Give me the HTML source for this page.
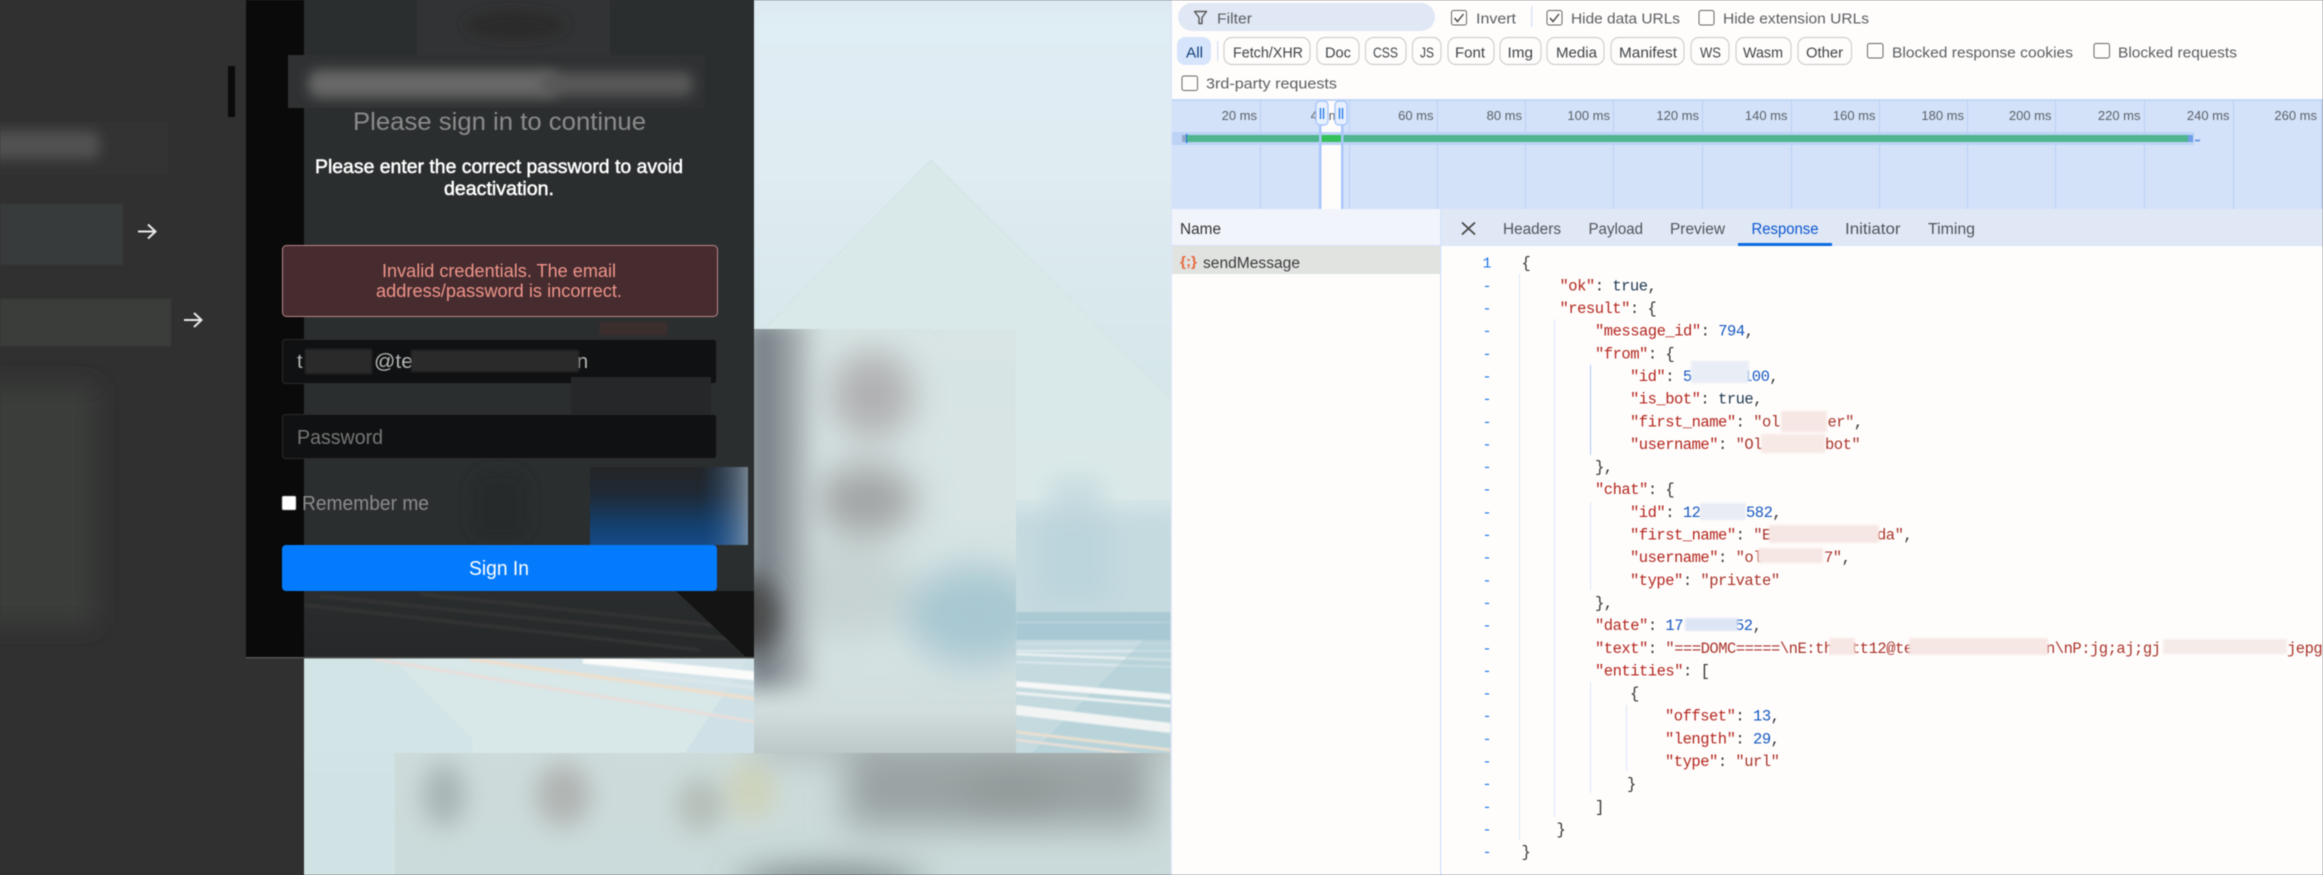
<!DOCTYPE html>
<html><head><meta charset="utf-8"><title>Network</title>
<style>
html,body{margin:0;padding:0;background:#303030;width:2323px;height:875px;overflow:hidden}
svg{display:block;filter:blur(.4px)}
text{white-space:pre;font-family:"Liberation Sans",sans-serif}
.d{font-size:15px;fill:#3f4346}
.g{font-size:15px;fill:#5a5d61}
.t{font-size:13px;fill:#5b6068;text-anchor:end}
.c text,.c{font-family:"Liberation Mono",monospace;font-size:15.5px;letter-spacing:-.5px}
.c text{fill:#333}
.k{fill:#b3261e}.n{fill:#1558c0}.s{fill:#a9342b}.b{fill:#1f3a52}
.ln{font-family:"Liberation Mono",monospace;font-size:15px;fill:#1a73e8;text-anchor:middle}
.tab{font-size:15.5px;fill:#50555b}
</style></head>
<body>
<svg width="2323" height="875" viewBox="0 0 2323 875" xmlns="http://www.w3.org/2000/svg">
<defs>
<linearGradient id="bg" x1="0" y1="0" x2="0" y2="1">
<stop offset="0" stop-color="#dde9f0"/><stop offset=".03" stop-color="#dfedf4"/><stop offset=".2" stop-color="#dfecf2"/><stop offset=".4" stop-color="#d7e7ea"/><stop offset=".7" stop-color="#d3e4e5"/><stop offset="1" stop-color="#d0e2e4"/>
</linearGradient>
<linearGradient id="blue" x1="0" y1="0" x2="0" y2="1">
<stop offset="0" stop-color="#242526"/><stop offset=".35" stop-color="#1f2a36"/><stop offset=".75" stop-color="#14406f"/><stop offset="1" stop-color="#164a86"/>
</linearGradient>
<linearGradient id="fadeR" x1="0" y1="0" x2="1" y2="0">
<stop offset="0" stop-color="#164a86" stop-opacity="0"/><stop offset="1" stop-color="#8fa0b0" stop-opacity=".75"/>
</linearGradient>
<linearGradient id="blockB" x1="0" y1="0" x2="0" y2="1">
<stop offset="0" stop-color="#d8e5e4"/><stop offset=".75" stop-color="#d6e3e3"/><stop offset=".9" stop-color="#d2dede"/><stop offset="1" stop-color="#bcc7c7"/>
</linearGradient>
<linearGradient id="botB" x1="0" y1="0" x2="0" y2="1">
<stop offset="0" stop-color="#cddbda"/><stop offset="1" stop-color="#cbdada"/>
</linearGradient>
<linearGradient id="panelB" x1="0" y1="0" x2="0" y2="1">
<stop offset="0" stop-color="#2b2e2f"/><stop offset=".88" stop-color="#2b2e2f"/><stop offset="1" stop-color="#262829"/>
</linearGradient>
<linearGradient id="strip" x1="0" y1="0" x2="1" y2="0">
<stop offset="0" stop-color="#59626a"/><stop offset=".3" stop-color="#7d868c"/><stop offset=".7" stop-color="#a5adb1"/><stop offset="1" stop-color="#b5bcbe" stop-opacity="0"/>
</linearGradient>
<filter id="b3" x="-30%" y="-30%" width="160%" height="160%"><feGaussianBlur stdDeviation="3"/></filter>
<filter id="b6" x="-30%" y="-80%" width="160%" height="260%"><feGaussianBlur stdDeviation="6"/></filter>
<filter id="b12" x="-50%" y="-50%" width="200%" height="200%"><feGaussianBlur stdDeviation="12"/></filter>
<filter id="b18" x="-60%" y="-60%" width="220%" height="220%"><feGaussianBlur stdDeviation="18"/></filter>
<filter id="b1" x="-10%" y="-10%" width="120%" height="120%"><feGaussianBlur stdDeviation="1"/></filter>
<filter id="bs" x="-5%" y="-30%" width="110%" height="160%"><feGaussianBlur stdDeviation=".8"/></filter>
<clipPath id="cBlock"><rect x="754" y="329" width="262" height="424"/></clipPath>
<clipPath id="cBot"><rect x="395" y="753" width="776" height="122"/></clipPath>
<clipPath id="cScene"><rect x="1016" y="440" width="155" height="313"/></clipPath>
<clipPath id="cName"><rect x="288" y="55" width="417" height="53"/></clipPath>
<clipPath id="cTop"><rect x="417" y="0" width="193" height="63"/></clipPath>
<clipPath id="cL1"><rect x="0" y="122" width="168" height="53"/></clipPath>
<clipPath id="cStreak"><rect x="304" y="659" width="450" height="94"/></clipPath>
<clipPath id="cCode"><rect x="1441" y="246" width="882" height="629"/></clipPath>
</defs>

<rect width="2323" height="875" fill="#303030"/>

<!-- background picture -->
<rect x="304" y="0" width="867" height="875" fill="url(#bg)"/>
<polygon points="931,160 1171,399 1171,753 754,753 754,339 764,329" fill="#d9e8e8"/>
<path d="M764 329 L931 160 L1171 399" fill="none" stroke="#d2e3ea" stroke-width="1"/>

<!-- streaks under panel -->
<g clip-path="url(#cStreak)">
<rect x="304" y="659" width="450" height="94" fill="#d2e4e5"/>
<polygon points="393,659 472,738 472,753 685,753 756,670 756,659" fill="#d8e7e7"/>
<polygon points="470,659 756,659 756,700" fill="#d3e3e8"/>
<polygon points="685,753 756,646 756,753" fill="#cfe1e6"/>
<g filter="url(#bs)">
<path d="M470 659 L756 699" stroke="#ecdfcf" stroke-width="4"/>
<path d="M373 659 L756 722" stroke="#e9dedb" stroke-width="3"/>
<path d="M583 659 L756 676" stroke="#fbfbfa" stroke-width="9"/>
<path d="M640 674 L756 688" stroke="#d9e6ea" stroke-width="4"/>
</g>
</g>

<!-- right scene -->
<g clip-path="url(#cScene)">
<rect x="1016" y="500" width="155" height="253" fill="#c4dadf"/>
<g filter="url(#b12)">
<rect x="1000" y="400" width="190" height="108" fill="#dae8e8"/>
<rect x="1050" y="478" width="52" height="50" fill="#c8dce0"/>
<rect x="1040" y="512" width="70" height="90" fill="#bcd4db"/>
</g>
<g filter="url(#bs)">
<rect x="1016" y="612" width="155" height="10" fill="#abc9d3"/>
<rect x="1016" y="623" width="155" height="17" fill="#a9c8d5"/>
<rect x="1016" y="642" width="155" height="3" fill="#c9dde3"/>
<rect x="1016" y="650" width="155" height="2" fill="#e2ecef"/>
<path d="M1016 654 L1171 660" stroke="#eaf1f3" stroke-width="2.500"/>
<path d="M1016 662 L1171 667" stroke="#dde9ed" stroke-width="2"/>
</g>
<polygon points="1171,612 1032,753 1171,753" fill="#a8cad2" opacity=".4"/>
<g filter="url(#bs)">
<path d="M1016 684 L1171 697" stroke="#f6f7f7" stroke-width="6"/>
<path d="M1016 693 L1171 706" stroke="#eef2f2" stroke-width="3"/>
<path d="M1016 710 L1171 728" stroke="#f2f4f4" stroke-width="10"/>
<path d="M1016 732 L1171 750" stroke="#ebdfd0" stroke-width="3"/>
<path d="M1016 740 L1171 758" stroke="#ebdfd8" stroke-width="2.500"/>
</g>
</g>

<!-- large blurred block -->
<g clip-path="url(#cBlock)">
<rect x="754" y="329" width="262" height="424" fill="url(#blockB)"/>
<g filter="url(#b18)">
<ellipse cx="975" cy="615" rx="70" ry="50" fill="#a8c7d1"/>
<ellipse cx="850" cy="590" rx="60" ry="50" fill="#c6d3d2"/>
<ellipse cx="872" cy="395" rx="42" ry="44" fill="#b0b0b2"/>
<ellipse cx="866" cy="500" rx="50" ry="36" fill="#a3a5a6"/>
</g>
<rect x="746" y="318" width="74" height="370" fill="url(#strip)" filter="url(#b12)"/>
<ellipse cx="748" cy="615" rx="30" ry="40" fill="#48484a" filter="url(#b12)"/>
</g>

<!-- bottom blurred block -->
<g clip-path="url(#cBot)">
<rect x="395" y="753" width="776" height="122" fill="url(#botB)"/>
<g filter="url(#b12)">
<ellipse cx="444" cy="795" rx="22" ry="32" fill="#a8b5b6"/>
<ellipse cx="563" cy="795" rx="28" ry="32" fill="#b1b5b4"/>
<ellipse cx="700" cy="805" rx="24" ry="28" fill="#b6c0ba"/>
<ellipse cx="752" cy="790" rx="24" ry="30" fill="#cdd3bb"/>
</g>
<g filter="url(#b18)">
<rect x="846" y="742" width="305" height="85" fill="#9aa3a3"/>
<ellipse cx="1012" cy="793" rx="50" ry="26" fill="#929a9a"/>
<ellipse cx="830" cy="885" rx="95" ry="14" fill="#5e6a6a"/>
<rect x="760" y="730" width="420" height="26" fill="#a9b2b2"/>
</g>
</g>

<!-- login panel -->
<rect x="304" y="0" width="450" height="658" fill="url(#panelB)"/>
<g filter="url(#bs)">
<path d="M304 605 L700 650 M320 596 L740 640 M420 594 L740 628" stroke="#323232" stroke-width="4" opacity=".8"/>
</g>
<polygon points="676,591 754,591 754,658 747,658" fill="#141414"/>
<rect x="470" y="470" width="60" height="70" rx="20" fill="#272b2c" filter="url(#b6)"/>
<rect x="246" y="0" width="58" height="658" fill="#0a0a0a"/>
<rect x="246" y="657" width="508" height="1.500" fill="#555"/>

<g clip-path="url(#cTop)">
<rect x="417" y="0" width="193" height="63" fill="#323334"/>
<ellipse cx="515" cy="25" rx="50" ry="14" fill="#2c2c2c" filter="url(#b6)"/>
</g>
<g clip-path="url(#cName)">
<rect x="288" y="55" width="417" height="53" fill="#2f3132"/>
<rect x="308" y="70" width="250" height="28" rx="12" fill="#676767" filter="url(#b6)"/>
<rect x="540" y="72" width="153" height="24" rx="10" fill="#595959" filter="url(#b6)"/>
</g>

<text x="353" y="130" font-size="25" fill="#8b8b8b" textLength="293" lengthAdjust="spacingAndGlyphs">Please sign in to continue</text>
<text x="315" y="173" font-size="19.5" fill="#fff" stroke="#fff" stroke-width=".5" textLength="368" lengthAdjust="spacingAndGlyphs">Please enter the correct password to avoid</text>
<text x="444" y="195" font-size="19.5" fill="#fff" stroke="#fff" stroke-width=".5" textLength="110" lengthAdjust="spacingAndGlyphs">deactivation.</text>

<rect x="282.500" y="245.500" width="435" height="71" rx="4" fill="#462b2f" stroke="#b98888"/>
<text x="382" y="277" font-size="18" fill="#ee9589" textLength="234" lengthAdjust="spacingAndGlyphs">Invalid credentials. The email</text>
<text x="376" y="297" font-size="18" fill="#ee9589" textLength="246" lengthAdjust="spacingAndGlyphs">address/password is incorrect.</text>

<rect x="600" y="322" width="67" height="13" fill="#3c2e2e" filter="url(#b1)"/>

<rect x="282.500" y="339.500" width="434" height="44" rx="3" fill="#101112" stroke="#2a2a2a"/>
<text x="297" y="368" font-size="20" fill="#b5b5b5">t</text>
<text x="374" y="368" font-size="20" fill="#b5b5b5" textLength="39" lengthAdjust="spacingAndGlyphs">@te</text>
<text x="577" y="368" font-size="20" fill="#b5b5b5">n</text>
<rect x="305" y="349" width="67" height="25" fill="#2b2b2b" filter="url(#b1)"/>
<rect x="411" y="350" width="168" height="22" fill="#2b2b2b" filter="url(#b1)"/>
<rect x="571" y="377" width="140" height="37" fill="#262728"/>

<rect x="282.500" y="414.500" width="434" height="44" rx="3" fill="#101112" stroke="#2a2a2a"/>
<text x="297" y="444" font-size="20" fill="#767676" textLength="86" lengthAdjust="spacingAndGlyphs">Password</text>

<rect x="282" y="496" width="14" height="14" rx="1.500" fill="#fff" stroke="#777" stroke-width=".6"/>
<text x="302" y="510" font-size="20" fill="#8c8c8c" textLength="127" lengthAdjust="spacingAndGlyphs">Remember me</text>

<rect x="590" y="467" width="158" height="78" fill="url(#blue)"/>
<rect x="700" y="467" width="48" height="78" fill="url(#fadeR)"/>

<rect x="282" y="545" width="435" height="46" rx="4" fill="#047bfd"/>
<text x="469" y="575" font-size="20" fill="#fff" textLength="60" lengthAdjust="spacingAndGlyphs">Sign In</text>

<!-- left dark content -->
<g clip-path="url(#cL1)">
<rect x="0" y="122" width="168" height="53" fill="#333333"/>
<rect x="-30" y="131" width="130" height="28" rx="10" fill="#515151" filter="url(#b6)"/>
</g>
<rect x="0" y="204" width="123" height="61" fill="#393b3a" filter="url(#bs)"/>
<rect x="0" y="299" width="171" height="47" fill="#3a3c3b" filter="url(#bs)"/>
<rect x="-40" y="385" width="135" height="240" fill="#3a3d3b" filter="url(#b12)"/>
<rect x="228" y="66" width="7" height="51" fill="#0b0b0b"/>
<path d="M138 231.500H155 M148 224.500L155.500 231.500L148 238.500" fill="none" stroke="#e8e8e8" stroke-width="2"/>
<path d="M184 320H201 M194 313L201.500 320L194 327" fill="none" stroke="#e8e8e8" stroke-width="2"/>

<!-- DEVTOOLS -->
<rect x="1171" y="0" width="1152" height="875" fill="#fffdfc"/>
<rect x="1170.500" y="0" width="1.500" height="875" fill="#dbe6f6"/>

<rect x="1178" y="3" width="257" height="28" rx="14" fill="#e0e8f5"/>
<path d="M1194.500 11.500H1206.500L1202 17.500V23.500H1199V17.500Z" fill="none" stroke="#555" stroke-width="1.400" stroke-linejoin="round"/>
<text x="1217" y="23.500" class="g" textLength="35" lengthAdjust="spacingAndGlyphs">Filter</text>

<rect x="1451.500" y="10.500" width="15" height="14.500" rx="2" fill="#fffdfc" stroke="#666"/>
<path d="M1454.500 18l3 3.500l6-7.500" fill="none" stroke="#444" stroke-width="1.400"/>
<text x="1476" y="23.500" class="g" textLength="40" lengthAdjust="spacingAndGlyphs">Invert</text>
<rect x="1531" y="6" width="1.500" height="21" fill="#d8e3f3"/>
<rect x="1547" y="10.500" width="15" height="14.500" rx="2" fill="#fffdfc" stroke="#666"/>
<path d="M1550 18l3 3.500l6-7.500" fill="none" stroke="#444" stroke-width="1.400"/>
<text x="1571" y="23.500" class="g" textLength="109" lengthAdjust="spacingAndGlyphs">Hide data URLs</text>
<rect x="1699" y="10.500" width="15" height="14.500" rx="2" fill="#fffdfc" stroke="#666"/>
<text x="1723" y="23.500" class="g" textLength="146" lengthAdjust="spacingAndGlyphs">Hide extension URLs</text>

<rect x="1177" y="37" width="34" height="28" rx="8" fill="#d6e5fb"/>
<text x="1186" y="57.500" class="d" style="fill:#113f7a" textLength="17" lengthAdjust="spacingAndGlyphs">All</text>
<rect x="1217" y="41" width="1.500" height="20" fill="#d8e3f3"/>

<g fill="#fffdfc" stroke="#cfcfcf" stroke-width="1.200">
<rect x="1224" y="37.500" width="86" height="27" rx="8"/>
<rect x="1317" y="37.500" width="42" height="27" rx="8"/>
<rect x="1365.500" y="37.500" width="40.500" height="27" rx="8"/>
<rect x="1412.500" y="37.500" width="28.500" height="27" rx="8"/>
<rect x="1448" y="37.500" width="46" height="27" rx="8"/>
<rect x="1500" y="37.500" width="41" height="27" rx="8"/>
<rect x="1547" y="37.500" width="57" height="27" rx="8"/>
<rect x="1611" y="37.500" width="73" height="27" rx="8"/>
<rect x="1691" y="37.500" width="38" height="27" rx="8"/>
<rect x="1736" y="37.500" width="55" height="27" rx="8"/>
<rect x="1798" y="37.500" width="53.500" height="27" rx="8"/>
</g>
<text x="1233" y="57.500" class="d" textLength="70" lengthAdjust="spacingAndGlyphs">Fetch/XHR</text>
<text x="1325" y="57.500" class="d" textLength="26" lengthAdjust="spacingAndGlyphs">Doc</text>
<text x="1373" y="57.500" class="d" textLength="25" lengthAdjust="spacingAndGlyphs">CSS</text>
<text x="1420" y="57.500" class="d" textLength="14" lengthAdjust="spacingAndGlyphs">JS</text>
<text x="1455" y="57.500" class="d" textLength="30" lengthAdjust="spacingAndGlyphs">Font</text>
<text x="1507.500" y="57.500" class="d" textLength="25.500" lengthAdjust="spacingAndGlyphs">Img</text>
<text x="1556" y="57.500" class="d" textLength="41" lengthAdjust="spacingAndGlyphs">Media</text>
<text x="1619" y="57.500" class="d" textLength="58" lengthAdjust="spacingAndGlyphs">Manifest</text>
<text x="1700" y="57.500" class="d" textLength="21" lengthAdjust="spacingAndGlyphs">WS</text>
<text x="1743" y="57.500" class="d" textLength="40" lengthAdjust="spacingAndGlyphs">Wasm</text>
<text x="1806" y="57.500" class="d" textLength="37" lengthAdjust="spacingAndGlyphs">Other</text>

<rect x="1867.500" y="43.500" width="15.500" height="14.500" rx="2" fill="#fffdfc" stroke="#666"/>
<text x="1892" y="57.500" class="g" textLength="181" lengthAdjust="spacingAndGlyphs">Blocked response cookies</text>
<rect x="2094" y="43.500" width="15.500" height="14.500" rx="2" fill="#fffdfc" stroke="#666"/>
<text x="2118" y="57.500" class="g" textLength="119" lengthAdjust="spacingAndGlyphs">Blocked requests</text>
<rect x="1182" y="76" width="15.500" height="14.500" rx="2" fill="#fffdfc" stroke="#666"/>
<text x="1206" y="88.500" class="g" textLength="131" lengthAdjust="spacingAndGlyphs">3rd-party requests</text>

<!-- timeline -->
<rect x="1172" y="99" width="1151" height="110" fill="#d3e2f9"/>
<rect x="1172" y="99" width="1151" height="2" fill="#c3d7f8"/>
<g fill="#b9d0f6">
<rect x="1260" y="101" width="1" height="108"/><rect x="1349" y="101" width="1" height="108"/><rect x="1437" y="101" width="1" height="108"/><rect x="1525" y="101" width="1" height="108"/><rect x="1613" y="101" width="1" height="108"/><rect x="1702" y="101" width="1" height="108"/><rect x="1791" y="101" width="1" height="108"/><rect x="1879" y="101" width="1" height="108"/><rect x="1967" y="101" width="1" height="108"/><rect x="2055" y="101" width="1" height="108"/><rect x="2144" y="101" width="1" height="108"/><rect x="2233" y="101" width="1" height="108"/><rect x="2321" y="101" width="1" height="108"/>
</g>
<rect x="1321" y="101" width="20" height="108" fill="#fffdfc"/>
<rect x="1172" y="132" width="1022" height="13" fill="#bcd3f6"/>
<text x="1257" y="120" class="t">20 ms</text>
<text x="1346" y="120" class="t">40 ms</text>
<text x="1433.500" y="120" class="t">60 ms</text>
<text x="1522" y="120" class="t">80 ms</text>
<text x="1610" y="120" class="t">100 ms</text>
<text x="1699" y="120" class="t">120 ms</text>
<text x="1787.500" y="120" class="t">140 ms</text>
<text x="1875.500" y="120" class="t">160 ms</text>
<text x="1964" y="120" class="t">180 ms</text>
<text x="2051.500" y="120" class="t">200 ms</text>
<text x="2140.500" y="120" class="t">220 ms</text>
<text x="2229.500" y="120" class="t">240 ms</text>
<text x="2317" y="120" class="t">260 ms</text>
<rect x="1182" y="135" width="5" height="7" fill="#93a8c8"/>
<rect x="1186" y="134" width="1.500" height="9" fill="#1a73e8"/>
<rect x="1187" y="135" width="1001" height="7" fill="#4fb58f"/>
<rect x="1321" y="135" width="20" height="7" fill="#34c05a"/>
<rect x="2188" y="135" width="5" height="7" fill="#6f9fe6"/>
<rect x="2195" y="139.500" width="5" height="2" fill="#6f9fe6"/>
<rect x="1319" y="125" width="2.500" height="84" fill="#a8c7fa"/>
<rect x="1341" y="125" width="2.500" height="84" fill="#a8c7fa"/>
<rect x="1316" y="101" width="12" height="24" rx="4" fill="#e8f0fe" stroke="#a8c7fa" stroke-width="1.400"/>
<rect x="1335" y="101" width="12" height="24" rx="4" fill="#e8f0fe" stroke="#a8c7fa" stroke-width="1.400"/>
<path d="M1320.500 108v11 M1323.500 108v11 M1339.500 108v11 M1342.500 108v11" stroke="#1a73e8" stroke-width="1.300"/>

<!-- header row -->
<rect x="1172" y="209" width="268" height="36" fill="#f1f4fb"/>
<rect x="1441" y="209" width="882" height="36" fill="#e0e8f5"/>
<rect x="1172" y="245" width="268" height="1" fill="#d6e3f7"/>
<rect x="1441" y="245" width="882" height="1" fill="#d6e3f7"/>
<text x="1180" y="234" class="tab" style="fill:#333" textLength="41" lengthAdjust="spacingAndGlyphs">Name</text>
<path d="M1462 222.500L1475 234.500M1475 222.500L1462 234.500" stroke="#444" stroke-width="1.700"/>
<text x="1503" y="234" class="tab" textLength="58" lengthAdjust="spacingAndGlyphs">Headers</text>
<text x="1588.500" y="234" class="tab" textLength="54.500" lengthAdjust="spacingAndGlyphs">Payload</text>
<text x="1670" y="234" class="tab" textLength="55" lengthAdjust="spacingAndGlyphs">Preview</text>
<text x="1751.500" y="234" class="tab" style="fill:#0b57d0" textLength="67" lengthAdjust="spacingAndGlyphs">Response</text>
<rect x="1738" y="243" width="94" height="3" fill="#0b6be0"/>
<text x="1845" y="234" class="tab" textLength="55.500" lengthAdjust="spacingAndGlyphs">Initiator</text>
<text x="1928" y="234" class="tab" textLength="47" lengthAdjust="spacingAndGlyphs">Timing</text>

<rect x="1172" y="246" width="268" height="28" fill="#e1e3e1"/>
<text x="1180" y="266" font-size="14" fill="#e8693f" textLength="17" lengthAdjust="spacingAndGlyphs" font-weight="bold">{;}</text>
<text x="1203" y="268" class="tab" style="fill:#3a3a3a" textLength="97" lengthAdjust="spacingAndGlyphs">sendMessage</text>
<rect x="1440" y="209" width="1.500" height="666" fill="#d6e4fb"/>

<!-- gutter -->
<text class="ln" x="1487" y="267.700">1</text>
<g class="ln">
<text class="ln" x="1487" y="290.400">-</text><text class="ln" x="1487" y="313">-</text><text class="ln" x="1487" y="335.700">-</text><text class="ln" x="1487" y="358.300">-</text><text class="ln" x="1487" y="381">-</text><text class="ln" x="1487" y="403.600">-</text><text class="ln" x="1487" y="426.300">-</text><text class="ln" x="1487" y="448.900">-</text><text class="ln" x="1487" y="471.600">-</text><text class="ln" x="1487" y="494.200">-</text><text class="ln" x="1487" y="516.900">-</text><text class="ln" x="1487" y="539.500">-</text><text class="ln" x="1487" y="562.200">-</text><text class="ln" x="1487" y="584.800">-</text><text class="ln" x="1487" y="607.500">-</text><text class="ln" x="1487" y="630.100">-</text><text class="ln" x="1487" y="652.800">-</text><text class="ln" x="1487" y="675.400">-</text><text class="ln" x="1487" y="698.100">-</text><text class="ln" x="1487" y="720.700">-</text><text class="ln" x="1487" y="743.400">-</text><text class="ln" x="1487" y="766">-</text><text class="ln" x="1487" y="788.700">-</text><text class="ln" x="1487" y="811.300">-</text><text class="ln" x="1487" y="834">-</text><text class="ln" x="1487" y="856.600">-</text>
</g>

<!-- indent guides -->
<g fill="#dbe6f8">
<rect x="1519" y="274" width="1" height="566"/>
<rect x="1554" y="319" width="1" height="498"/>
<rect x="1590" y="502" width="1" height="88"/>
<rect x="1590" y="682" width="1" height="111"/>
<rect x="1626" y="705" width="1" height="66"/>
</g>
<rect x="1590" y="365" width="1" height="90" fill="#a8c7fa"/>

<!-- code -->
<g class="c" clip-path="url(#cCode)">
<text x="1521.500" y="267.700">{</text>
<text x="1559.500" y="290.400"><tspan class="k">"ok"</tspan>: <tspan class="b">true</tspan>,</text>
<text x="1559.500" y="313"><tspan class="k">"result"</tspan>: {</text>
<text x="1595" y="335.700"><tspan class="k">"message_id"</tspan>: <tspan class="n">794</tspan>,</text>
<text x="1595" y="358.300"><tspan class="k">"from"</tspan>: {</text>
<text x="1630" y="381"><tspan class="k">"id"</tspan>: <tspan class="n">5</tspan></text>
<text x="1743" y="381"><tspan class="n">100</tspan>,</text>
<text x="1630" y="403.600"><tspan class="k">"is_bot"</tspan>: <tspan class="b">true</tspan>,</text>
<text x="1630" y="426.300"><tspan class="k">"first_name"</tspan>: <tspan class="s">"ol</tspan></text>
<text x="1827.500" y="426.300"><tspan class="s">er"</tspan>,</text>
<text x="1630" y="448.900"><tspan class="k">"username"</tspan>: <tspan class="s">"Ol</tspan></text>
<text x="1825" y="448.900"><tspan class="s">bot"</tspan></text>
<text x="1595" y="471.600">},</text>
<text x="1595" y="494.200"><tspan class="k">"chat"</tspan>: {</text>
<text x="1630" y="516.900"><tspan class="k">"id"</tspan>: <tspan class="n">12</tspan></text>
<text x="1746" y="516.900"><tspan class="n">582</tspan>,</text>
<text x="1630" y="539.500"><tspan class="k">"first_name"</tspan>: <tspan class="s">"E</tspan></text>
<text x="1877" y="539.500"><tspan class="s">da"</tspan>,</text>
<text x="1630" y="562.200"><tspan class="k">"username"</tspan>: <tspan class="s">"ol</tspan></text>
<text x="1824" y="562.200"><tspan class="s">7"</tspan>,</text>
<text x="1630" y="584.800"><tspan class="k">"type"</tspan>: <tspan class="s">"private"</tspan></text>
<text x="1595" y="607.500">},</text>
<text x="1595" y="630.100"><tspan class="k">"date"</tspan>: <tspan class="n">17</tspan></text>
<text x="1735" y="630.100"><tspan class="n">52</tspan>,</text>
<text x="1595" y="652.800"><tspan class="k">"text"</tspan>: <tspan class="s">"===DOMC=====\nE:th</tspan></text>
<text x="1851" y="652.800"><tspan class="s">tt12@te</tspan></text>
<text x="2046" y="652.800"><tspan class="s">n\nP:jg;aj;gj</tspan></text>
<text x="2287" y="652.800"><tspan class="s">jepg</tspan></text>
<text x="1595" y="675.400"><tspan class="k">"entities"</tspan>: [</text>
<text x="1630" y="698.100">{</text>
<text x="1665" y="720.700"><tspan class="k">"offset"</tspan>: <tspan class="n">13</tspan>,</text>
<text x="1665" y="743.400"><tspan class="k">"length"</tspan>: <tspan class="n">29</tspan>,</text>
<text x="1665" y="766"><tspan class="k">"type"</tspan>: <tspan class="s">"url"</tspan></text>
<text x="1627" y="788.700">}</text>
<text x="1595" y="811.300">]</text>
<text x="1556.500" y="834">}</text>
<text x="1521.500" y="856.600">}</text>
</g>

<!-- redaction boxes -->
<g filter="url(#b1)">
<rect x="1691" y="361" width="58" height="22" fill="#e8edf6"/>
<rect x="1781" y="411" width="46" height="21" fill="#f7e7e4"/>
<rect x="1761" y="434" width="64" height="19" fill="#f7e9e6"/>
<rect x="1700" y="503" width="46" height="17" fill="#e9ecf5"/>
<rect x="1769" y="525" width="110" height="18" fill="#f7e7e4"/>
<rect x="1758" y="548" width="65" height="15" fill="#f7e7e4"/>
<rect x="1685" y="618" width="53" height="13" fill="#dde5f4"/>
<rect x="1829" y="638" width="26" height="17" fill="#f7e7e4"/>
<rect x="1909" y="638" width="139" height="17" fill="#f7e7e4"/>
<rect x="2163" y="639" width="124" height="15" fill="#f5ecea"/>
</g>
</svg>
</body></html>
